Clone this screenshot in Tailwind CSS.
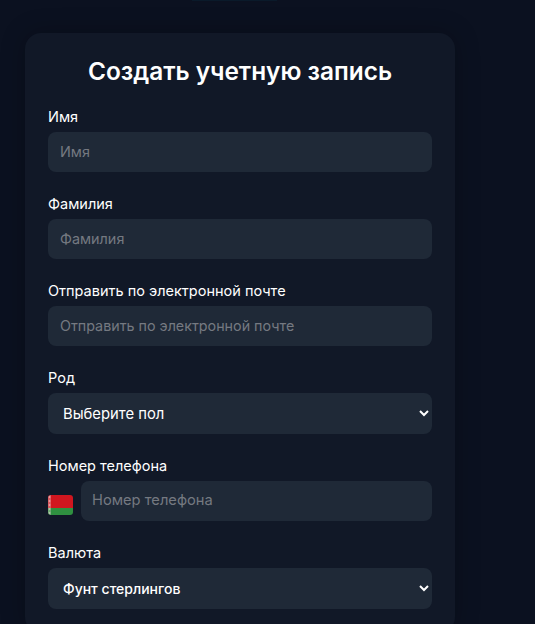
<!DOCTYPE html>
<html lang="ru">
<head>
    <meta charset="UTF-8">
    <title>Создать учетную запись</title>
    <script src="https://cdn.jsdelivr.net/npm/@tailwindcss/browser@4"></script>
</head>
<body class="h-[624px] overflow-hidden bg-[#0b1120] font-['Inter',sans-serif] text-white">
    <div class="absolute top-0 left-[192px] h-px w-[85px] bg-[#0a1a2a]"></div>
    <div class="pt-[33px] pl-[25px]">
        <form class="flex w-[430px] flex-col rounded-2xl bg-[#111827] px-[23px] pt-[23px] pb-6 shadow-[0_0_25px_rgba(0,0,0,0.25)]">
            <h1 class="mb-[21px] text-center text-[24.4px] leading-[30px] font-semibold">Создать учетную запись</h1>

            <label class="mb-[5px] h-5 text-[14.5px] leading-5">Имя</label>
            <input type="text" placeholder="Имя" class="mb-[22px] h-10 rounded-lg bg-[#1f2937] px-3 pb-[2px] text-[14.4px] outline-none placeholder:text-[#757981]">

            <label class="mb-[5px] h-5 text-[14.5px] leading-5">Фамилия</label>
            <input type="text" placeholder="Фамилия" class="mb-[22px] h-10 rounded-lg bg-[#1f2937] px-3 pb-[2px] text-[14.4px] outline-none placeholder:text-[#757981]">

            <label class="mb-[5px] h-5 text-[14.5px] leading-5">Отправить по электронной почте</label>
            <input type="text" placeholder="Отправить по электронной почте" class="mb-[22px] h-10 rounded-lg bg-[#1f2937] px-3 pb-[2px] text-[14.3px] outline-none placeholder:text-[#757981]">

            <label class="mb-[5px] h-5 text-[14.5px] leading-5">Род</label>
            <select class="mb-[22px] h-[41px] appearance-auto rounded-lg bg-[#1f2937] pr-[5px] pl-[11px] text-[14.8px] outline-none">
                <option>Выберите пол</option>
            </select>

            <label class="mb-[5px] h-5 text-[14.5px] leading-5">Номер телефона</label>
            <div class="mb-[22px] flex items-center gap-2">
                <svg class="mt-[7px] h-5 w-[25px] shrink-0 rounded-[3px]" viewBox="0 0 25 20">
                    <rect width="25" height="13" fill="#d0161f"/>
                    <rect y="13" width="25" height="7" fill="#2f9040"/>
                    <rect width="3" height="20" fill="#f0dcdc" opacity="0.35"/>
                    <path d="M1.5 1v2M1.5 5v2M1.5 9v2M1.5 13v2M1.5 17v2" stroke="#f0dcdc" stroke-width="1.5" opacity="0.5"/>
                </svg>
                <input type="text" placeholder="Номер телефона" class="h-10 min-w-0 flex-1 rounded-lg bg-[#1f2937] px-[11px] pb-[2px] text-[14.7px] outline-none placeholder:text-[#757981]">
            </div>

            <label class="mb-[5px] h-5 text-[14.5px] leading-5">Валюта</label>
            <select class="h-[41px] appearance-auto rounded-lg bg-[#1f2937] pr-[5px] pl-[11px] text-sm font-medium outline-none">
                <option>Фунт стерлингов</option>
            </select>
        </form>
    </div>
</body>
</html>
